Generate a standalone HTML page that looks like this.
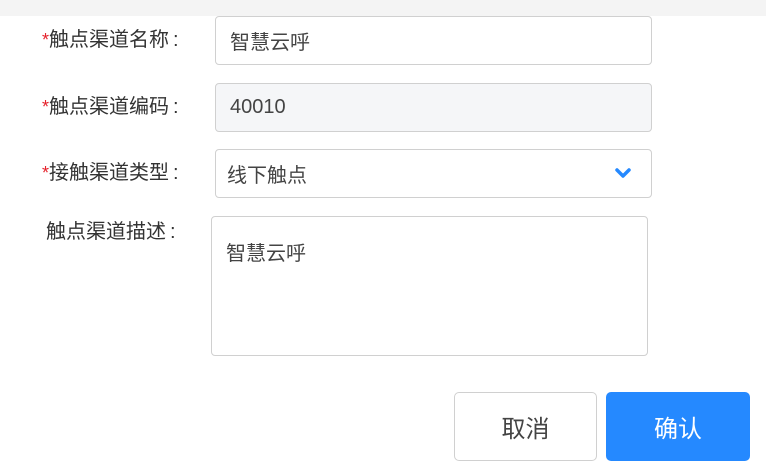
<!DOCTYPE html>
<html><head><meta charset="utf-8"><style>
*{margin:0;padding:0;box-sizing:border-box}
body{width:766px;height:472px;background:#fff;position:relative;overflow:hidden;font-family:"Liberation Sans","Noto Sans CJK SC",sans-serif;color:#333}
.top{position:absolute;left:0;top:0;width:766px;height:16px;background:#f4f4f4}
.lbl{position:absolute;font-size:20px;line-height:26px;white-space:nowrap}
.lbl b{color:#e5202a;font-weight:normal;font-size:18px}
.lbl i{font-style:normal;margin-left:4px}
.box{position:absolute;border:1px solid #d0d0d0;border-radius:4px;font-size:20px;color:#444;padding-left:14px;display:flex;align-items:center}
.btn{position:absolute;top:392px;width:144px;height:69px;border-radius:5px;font-size:24px;display:flex;align-items:center;justify-content:center}
</style></head><body>
<div class="top"></div>
<div class="lbl" style="left:42px;top:27px"><b>*</b>触点渠道名称<i>:</i></div>
<div class="box" style="left:215px;top:16px;width:437px;height:49px">智慧云呼</div>
<div class="lbl" style="left:42px;top:94px"><b>*</b>触点渠道编码<i>:</i></div>
<div class="box" style="left:215px;top:83px;width:437px;height:49px;background:#f5f6f8">40010</div>
<div class="lbl" style="left:42px;top:160px"><b>*</b>接触渠道类型<i>:</i></div>
<div class="box" style="left:215px;top:149px;width:437px;height:49px;padding-left:11px">线下触点
<svg style="position:absolute;left:398px;top:17px" width="18" height="12" viewBox="0 0 18 12"><path d="M3 3l6 6 6-6" stroke="#2589ff" stroke-width="3.5" fill="none" stroke-linecap="round" stroke-linejoin="round"/></svg></div>
<div class="lbl" style="left:46px;top:219px">触点渠道描述<i>:</i></div>
<div class="box" style="left:211px;top:216px;width:437px;height:140px;align-items:flex-start;padding-top:20px">智慧云呼</div>
<div class="btn" style="left:454px;width:143px;border:1px solid #d0d0d0;color:#444">取消</div>
<div class="btn" style="left:606px;background:#2589ff;color:#fff">确认</div>
</body></html>
